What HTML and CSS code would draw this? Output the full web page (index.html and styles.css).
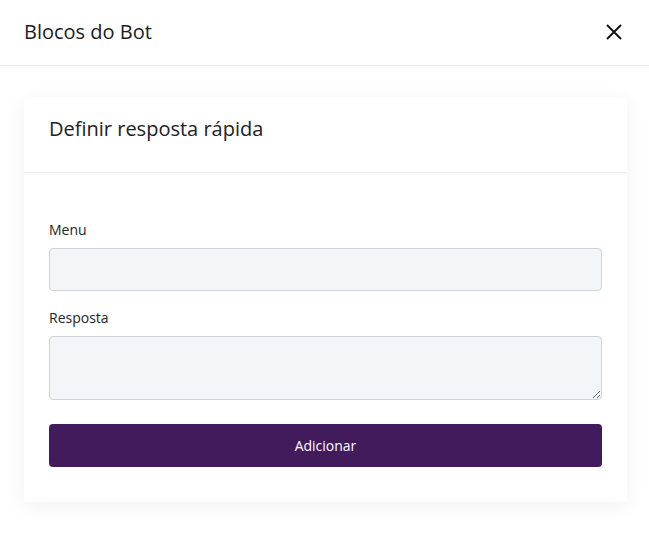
FILE: index.html
```html
<!DOCTYPE html>
<html lang="pt">
<head>
<meta charset="utf-8">
<link rel="stylesheet" href="styles.css">
</head>
<body>
<div class="modal">
  <header class="modal-header">
    <h1 class="modal-title">Blocos do Bot</h1>
    <button class="close" aria-label="Fechar">
      <svg width="16" height="16" viewBox="0 0 16 16"><path d="M1 1L15 15M15 1L1 15" stroke="#111" stroke-width="1.9" fill="none"/></svg>
    </button>
  </header>
  <div class="modal-body">
    <section class="card">
      <div class="card-header">
        <h2 class="card-title">Definir resposta rápida</h2>
      </div>
      <form class="card-body">
        <label class="label" for="menu">Menu</label>
        <input class="input" id="menu" type="text">
        <label class="label" for="resp">Resposta</label>
        <textarea class="input textarea" id="resp"></textarea>
        <button type="button" class="btn">Adicionar</button>
      </form>
    </section>
  </div>
</div>
</body>
</html>
```
FILE: styles.css
```css
* { box-sizing: border-box; }
html, body { margin: 0; padding: 0; background: #fff; }
body { font-family: "Open Sans", "Noto Sans", sans-serif; color: #212529; }
.modal { width: 649px; height: 552px; }
.modal-header {
  height: 66px;
  border-bottom: 1px solid #e9ecef;
  display: flex;
  align-items: center;
  justify-content: space-between;
  padding: 0 27px 2px 24px;
}
.modal-title { margin: 0; font-size: 20px; font-weight: 400; line-height: 1; color: #1b1b1b; }
.close { border: 0; background: none; padding: 0; display: flex; cursor: pointer; }
.modal-body { padding: 31px 22px 0 24px; }
.card {
  background: #fff;
  box-shadow: 0 4px 20px rgba(0,0,0,0.06);
  border-radius: 2px;
}
.card-header { height: 76px; border-bottom: 1px solid #eceff1; display: flex; align-items: center; padding: 0 25px; }
.card-title { margin: 0; font-size: 20px; font-weight: 400; color: #212121; position: relative; top: -6px; }
.card-body { display: flex; flex-direction: column; padding: 47px 25px 35px; }
.label { font-size: 14px; color: #212529; line-height: 20px; margin-bottom: 8px; }
.input {
  height: 43px;
  background: #f3f6f9;
  border: 1px solid #ced4da;
  border-radius: 4px;
  margin-bottom: 17px;
  font: inherit;
}
.textarea { height: 64px; margin-bottom: 24px; resize: vertical; }
.btn {
  height: 43px;
  border: 0;
  border-radius: 4px;
  background: #421b5c;
  color: #fff;
  font-family: "Open Sans", "Noto Sans", sans-serif;
  font-size: 14px;
}
```
